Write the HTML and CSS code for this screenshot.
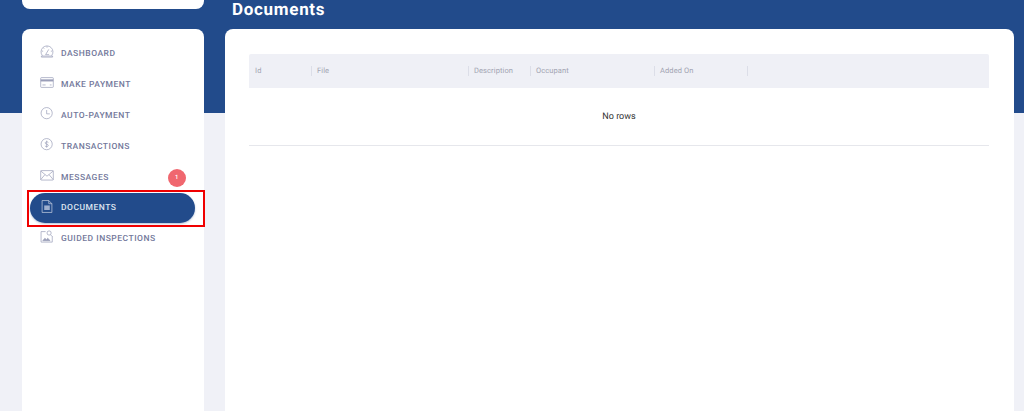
FILE: index.html
```html
<!DOCTYPE html>
<html lang="en">
<head>
  <meta charset="UTF-8">
  <title>Documents</title>
  <link rel="stylesheet" href="styles.css">
</head>
<body>
  <div class="band"></div>

  <div class="layout">
    <aside class="side">
      <div class="logo-card"></div>
      <nav class="side-nav">
        <a class="nav-item">
          <svg class="nav-icon" viewBox="0 0 20 18"><path d="M3.500 15A8.500 8.500 0 1 1 16.500 15"/><path d="M2 15.500H18V17H2Z"/><path d="M8 13.500L12.500 6M8 13.500h5M10 1.500V3.500M2.500 8.500H4.500M15.500 8.500h2M4.500 3.500l1.500 1.500"/></svg>
          <span>DASHBOARD</span>
        </a>
        <a class="nav-item">
          <svg class="nav-icon" viewBox="0 0 20 18"><rect x="1" y="2" width="18" height="14" rx="1"/><path class="card-strip" d="M1 6H19"/><path d="M3.500 12.500H8M14 12.500h2.500"/></svg>
          <span>MAKE PAYMENT</span>
        </a>
        <a class="nav-item">
          <svg class="nav-icon" viewBox="0 0 20 18"><circle cx="9.500" cy="8.500" r="8"/><path d="M9.500 4V9.500H14"/></svg>
          <span>AUTO-PAYMENT</span>
        </a>
        <a class="nav-item">
          <svg class="nav-icon" viewBox="0 0 20 18"><circle cx="9.500" cy="8.500" r="8"/><path d="M12 6.200C11.300 5 8 4.700 7.400 6.500 6.800 9 12 8 11.800 10.500 11.500 12.500 8 12.300 7 11M9.500 3.500V13.500"/></svg>
          <span>TRANSACTIONS</span>
        </a>
        <a class="nav-item">
          <svg class="nav-icon" viewBox="0 0 20 18"><rect x="1" y="2" width="18" height="13.500" rx="1"/><path d="M1 2.500L10 10 19 2.500M1 15L7 7.800M19 15L13 7.800"/></svg>
          <span>MESSAGES</span>
          <b class="badge">1</b>
        </a>
        <a class="nav-item active">
          <svg class="nav-icon" viewBox="0 0 20 18"><path d="M3 0.500H12.500L17 5V17.500H3Z"/><path d="M12.500 0.500V5H17"/><path class="doc-lines" d="M6 7.500H14V14H6Z"/></svg>
          <span>DOCUMENTS</span>
        </a>
        <a class="nav-item">
          <svg class="nav-icon" viewBox="0 0 20 18"><path d="M8 2H1.500V17H17.500V8.500"/><circle cx="13" cy="4" r="3"/><path d="M15 6.500L17.500 9"/><path class="pic" d="M4 15L7 11.500 9 13.500 11 11.500 14.500 15Z"/></svg>
          <span>GUIDED INSPECTIONS</span>
        </a>
      </nav>
      <div class="highlight"></div>
    </aside>

    <main class="main">
      <h1 class="page-title">Documents</h1>
      <section class="panel">
        <div class="grid-head">
          <div class="col col-id">Id</div>
          <div class="col col-file">File</div>
          <div class="col col-desc">Description</div>
          <div class="col col-occ">Occupant</div>
          <div class="col col-added">Added On</div>
          <div class="col col-rest"></div>
        </div>
        <div class="grid-empty">No rows</div>
      </section>
    </main>
  </div>
</body>
</html>
```

FILE: styles.css
```css
* { box-sizing: border-box; }
html, body {
  height: 100%;
}
body {
  margin: 0;
  height: 411px;
  overflow: hidden;
  background: #f0f1f7;
  font-family: Roboto, "Liberation Sans", sans-serif;
  text-rendering: geometricPrecision;
  position: relative;
}
.band {
  position: absolute;
  left: 0;
  top: 0;
  width: 100%;
  height: 113px;
  background: #224b8b;
}
.layout {
  position: relative;
  display: flex;
  align-items: flex-start;
  gap: 21px;
  padding-left: 22px;
}

/* sidebar */
.side {
  width: 182px;
  flex: none;
  position: relative;
}
.logo-card {
  height: 9px;
  background: #fff;
  border-radius: 0 0 8px 8px;
  margin-bottom: 20px;
}
.side-nav {
  height: 382px;
  background: #fff;
  border-radius: 8px 8px 0 0;
  padding: 9px 9px 0 8px;
}
.nav-item {
  height: 31px;
  display: flex;
  align-items: center;
  padding-left: 10px;
  color: #73789b;
  font-size: 8.5px;
  font-weight: 500;
  letter-spacing: 0.5px;
  border-radius: 15px;
  position: relative;
}
.nav-icon {
  width: 14px;
  height: 13px;
  margin-right: 7px;
  margin-top: -5px;
  fill: none;
  stroke: #9a9eb8;
  stroke-width: 1;
  flex: none;
}
.card-strip {
  stroke-width: 3;
}
.pic {
  fill: #9a9eb8;
}
.badge {
  position: absolute;
  right: 9px;
  top: 7px;
  width: 18px;
  height: 18px;
  border-radius: 50%;
  background: #f0676f;
  color: #fff;
  font-size: 6px;
  font-weight: 500;
  line-height: 18px;
  text-align: center;
}
.nav-item.active {
  height: 30px;
  background: #224b8b;
  color: #dfe4ef;
  box-shadow: 0 1px 2px rgba(34, 75, 139, 0.35);
}
.active .nav-icon {
  stroke: #c9d1e2;
  margin-top: -3px;
}
.active .doc-lines {
  fill: #9fb0cf;
  stroke: none;
}
.highlight {
  position: absolute;
  left: 5px;
  top: 190px;
  width: 178px;
  height: 37px;
  border: 2px solid #f00000;
}

/* main */
.main {
  width: 789px;
  flex: none;
}
.page-title {
  margin: 0;
  height: 29px;
  padding: 1px 0 0 7px;
  color: #fff;
  font-size: 17px;
  font-weight: 700;
  letter-spacing: 0.7px;
  line-height: 18px;
}
.panel {
  height: 382px;
  background: #fff;
  border-radius: 8px 8px 0 0;
  padding: 25px 25px 0 24px;
}
.grid-head {
  display: flex;
  height: 34px;
  align-items: center;
  background: #eff0f6;
  border-radius: 2px 2px 0 0;
  color: #a2a4b2;
  font-size: 7.5px;
  letter-spacing: 0.1px;
}
.col {
  height: 10px;
  line-height: 10px;
  padding-left: 5px;
  border-right: 1px solid #dcdee8;
  flex: none;
}
.col-id { width: 63px; padding-left: 6px; }
.col-file { width: 157px; }
.col-desc { width: 62px; }
.col-occ { width: 124px; }
.col-added { width: 93px; }
.col-rest { border: 0; }
.grid-empty {
  height: 58px;
  padding-top: 1px;
  display: flex;
  align-items: center;
  justify-content: center;
  border-bottom: 1px solid #e6e7ec;
  color: #333;
  font-size: 9px;
}
```
